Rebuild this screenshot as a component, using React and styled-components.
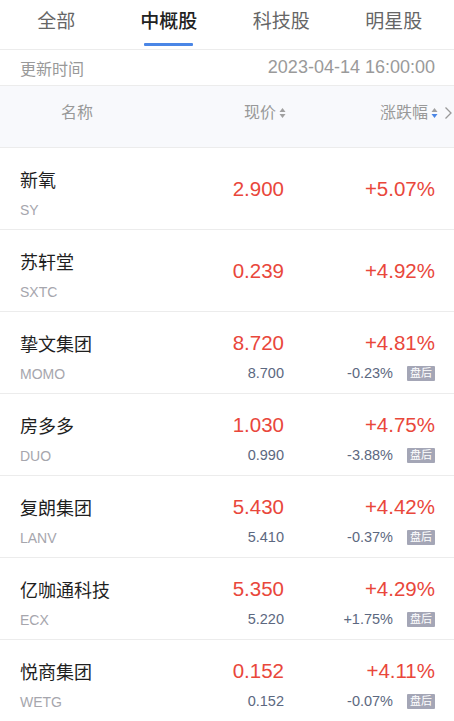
import React from 'react';
import styled, { createGlobalStyle } from 'styled-components';

const GlobalStyle = createGlobalStyle`
  body {
    margin: 0;
    background: #fff;
    font-family: "Liberation Sans", "Noto Sans CJK SC", sans-serif;
  }
`;

const Page = styled.div`
  width: 454px;
  height: 721px;
  overflow: hidden;
  background: #fff;
`;

const Tabs = styled.div`
  display: flex;
  height: 49px;
  border-bottom: 1px solid #ececec;
  padding: 0 4px 0 0;
`;

const Tab = styled.div`
  flex: 1;
  display: flex;
  flex-direction: column;
  align-items: center;
  font-size: 19px;
  line-height: 24px;
  padding-top: 10px;
  color: ${(p) => (p.active ? '#222' : '#666')};
  font-weight: ${(p) => (p.active ? 500 : 400)};

  &::after {
    content: '';
    display: block;
    width: 49px;
    height: 3px;
    margin-top: 9px;
    border-radius: 1px;
    background: ${(p) => (p.active ? '#4a86e6' : 'transparent')};
  }
`;

const UpdateBar = styled.div`
  display: flex;
  align-items: center;
  justify-content: space-between;
  height: 35px;
  padding: 0 19px 0 20px;
  border-bottom: 1px solid #ececec;
  color: #999;
  font-size: 16px;

  .time {
    font-size: 18px;
    color: #9a9a9a;
  }
`;

const Header = styled.div`
  display: flex;
  align-items: flex-start;
  height: 62px;
  padding-top: 16px;
  box-sizing: border-box;
  background: #f8f9fc;
  border-bottom: 1px solid #ececec;
  color: #999;
  font-size: 16px;
  line-height: 22px;
`;

const HeadCell = styled.div`
  display: flex;
  align-items: center;
  justify-content: ${(p) => (p.left ? 'flex-start' : 'flex-end')};
  width: ${(p) => p.w}px;
  padding-left: ${(p) => p.pl || 0}px;
  box-sizing: border-box;
  gap: 3px;
`;

const Chevron = styled.div`
  display: flex;
  align-items: center;
  height: 22px;
  margin-left: 6px;
`;

const Row = styled.div`
  display: grid;
  grid-template-columns: 1fr 100px 151px;
  height: 81px;
  padding: 0 19px 0 20px;
  border-bottom: 1px solid #ececec;
`;

const NameCol = styled.div`
  padding-top: 19px;
`;

const Name = styled.div`
  font-size: 18px;
  line-height: 28px;
  color: #1f1f1f;
`;

const Code = styled.div`
  margin-top: 5px;
  font-size: 14px;
  line-height: 20px;
  color: #a6a6ad;
`;

const NumCol = styled.div`
  display: flex;
  flex-direction: column;
  align-items: flex-end;
  align-self: ${(p) => (p.single ? 'center' : 'start')};
  padding-top: ${(p) => (p.single ? 0 : 19)}px;
`;

const Main = styled.div`
  font-size: 20.5px;
  line-height: 24px;
  color: #e9473b;
`;

const Sub = styled.div`
  display: flex;
  align-items: center;
  margin-top: 8px;
  font-size: 14.5px;
  line-height: 20px;
  color: #5c6880;
`;

const Badge = styled.span`
  display: inline-flex;
  align-items: center;
  justify-content: center;
  width: 28px;
  height: 15px;
  margin-left: 14px;
  background: #a4a6b6;
  color: #fff;
  font-size: 11px;
  border-radius: 1px;
`;

const SortIcon = ({ active }) => (
  <svg width="7" height="12" viewBox="0 0 7 12">
    <polygon points="3.5,1 6.5,5 0.5,5" fill="#a0a0a0" />
    <polygon points="0.5,7 6.5,7 3.5,11" fill={active ? '#4a86e6' : '#a0a0a0'} />
  </svg>
);

const stocks = [
  { name: '新氧', code: 'SY', price: '2.900', pct: '+5.07%' },
  { name: '苏轩堂', code: 'SXTC', price: '0.239', pct: '+4.92%' },
  { name: '挚文集团', code: 'MOMO', price: '8.720', pct: '+4.81%', after: '8.700', afterPct: '-0.23%' },
  { name: '房多多', code: 'DUO', price: '1.030', pct: '+4.75%', after: '0.990', afterPct: '-3.88%' },
  { name: '复朗集团', code: 'LANV', price: '5.430', pct: '+4.42%', after: '5.410', afterPct: '-0.37%' },
  { name: '亿咖通科技', code: 'ECX', price: '5.350', pct: '+4.29%', after: '5.220', afterPct: '+1.75%' },
  { name: '悦商集团', code: 'WETG', price: '0.152', pct: '+4.11%', after: '0.152', afterPct: '-0.07%' },
];

const tabs = ['全部', '中概股', '科技股', '明星股'];

export default function App() {
  return (
    <Page>
      <GlobalStyle />
      <Tabs>
        {tabs.map((t) => (
          <Tab key={t} active={t === '中概股'}>
            {t}
          </Tab>
        ))}
      </Tabs>
      <UpdateBar>
        <span>更新时间</span>
        <span className="time">2023-04-14 16:00:00</span>
      </UpdateBar>
      <Header>
        <HeadCell left w={184} pl={61}>名称</HeadCell>
        <HeadCell w={102}>
          现价 <SortIcon />
        </HeadCell>
        <HeadCell w={152}>
          涨跌幅 <SortIcon active />
        </HeadCell>
        <Chevron>
          <svg width="9" height="14" viewBox="0 0 9 14">
            <polyline points="1.5,1.5 7,7 1.5,12.5" fill="none" stroke="#999" strokeWidth="1.3" />
          </svg>
        </Chevron>
      </Header>
      {stocks.map((s) => (
        <Row key={s.code}>
          <NameCol>
            <Name>{s.name}</Name>
            <Code>{s.code}</Code>
          </NameCol>
          <NumCol single={!s.after}>
            <Main>{s.price}</Main>
            {s.after && <Sub>{s.after}</Sub>}
          </NumCol>
          <NumCol single={!s.after}>
            <Main>{s.pct}</Main>
            {s.after && (
              <Sub>
                {s.afterPct}
                <Badge>盘后</Badge>
              </Sub>
            )}
          </NumCol>
        </Row>
      ))}
    </Page>
  );
}
